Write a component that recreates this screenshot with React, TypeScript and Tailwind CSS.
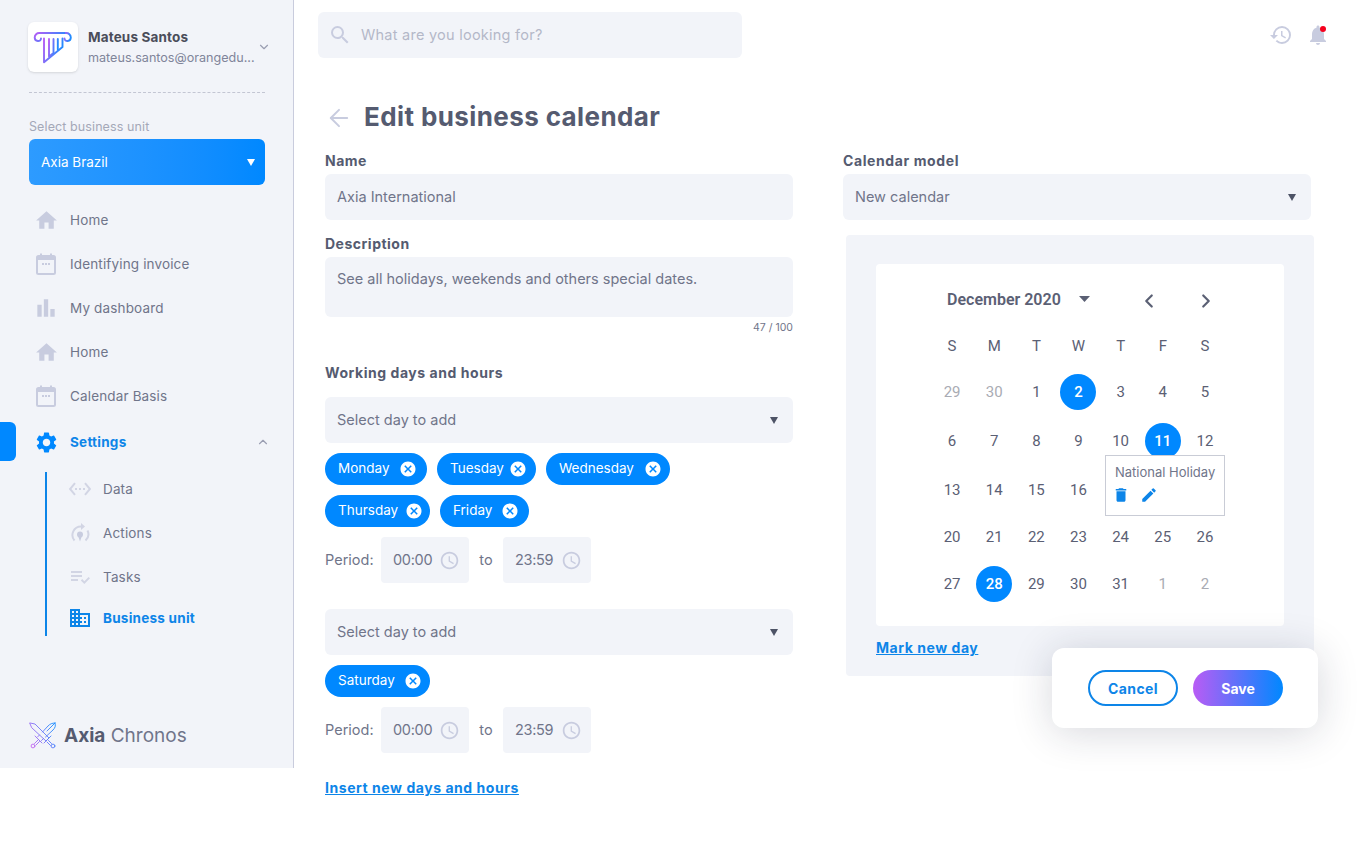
import { ArrowLeft, ChevronDown, ChevronLeft, ChevronRight, ChevronUp } from 'lucide-react';
import {
  MdAccessTime,
  MdBarChart,
  MdCancel,
  MdDelete,
  MdDomain,
  MdEdit,
  MdHistory,
  MdHome,
  MdNotifications,
  MdPlaylistAddCheck,
  MdSearch,
  MdSettings,
  MdSettingsEthernet,
} from 'react-icons/md';

function Triangle({ className, w = 8, h = 7 }: { className: string; w?: number; h?: number }) {
  return (
    <svg className={className} width={w} height={h} viewBox="0 0 8 7" preserveAspectRatio="none">
      <path d="M0 0H8L4 7z" fill="currentColor" />
    </svg>
  );
}

function CalendarIcon() {
  return (
    <svg width="20" height="22" viewBox="0 0 20 22" fill="none">
      <rect x="1" y="3" width="18" height="18" rx="1.5" stroke="#c8ccdf" strokeWidth="2" />
      <rect x="1" y="3" width="18" height="4" fill="#c8ccdf" />
      <rect x="4" y="0.5" width="2" height="4" fill="#c8ccdf" />
      <rect x="14" y="0.5" width="2" height="4" fill="#c8ccdf" />
      <rect x="6" y="10" width="2" height="2" fill="#c8ccdf" />
      <rect x="9" y="10" width="2" height="2" fill="#c8ccdf" />
      <rect x="12" y="10" width="2" height="2" fill="#c8ccdf" />
    </svg>
  );
}

function ActionsIcon() {
  return (
    <svg width="20" height="20" viewBox="0 0 20 20" fill="none">
      <path d="M4.500 17.500A8.500 8.500 0 0 1 11 3.500" stroke="#d2d5e4" strokeWidth="2" />
      <path d="M15.500 17.500A8.500 8.500 0 0 0 17.500 7.500" stroke="#d2d5e4" strokeWidth="2" />
      <path d="M11 0L15 3.500L11 7z" fill="#d2d5e4" />
      <circle cx="10" cy="11.500" r="3" fill="#c8ccdf" />
      <path d="M8.300 13.500H11.700L10 18.500z" fill="#c8ccdf" />
    </svg>
  );
}

function PillarLogo() {
  return (
    <svg width="50" height="50" viewBox="28 22 50 50" fill="none">
      <defs>
        <linearGradient id="pillar" x1="0" y1="0" x2="1" y2="0.4">
          <stop offset="0" stopColor="#b95cf5" />
          <stop offset="1" stopColor="#1f8cff" />
        </linearGradient>
      </defs>
      <g stroke="url(#pillar)" strokeWidth="1.9" strokeLinecap="round" strokeLinejoin="round">
        <path d="M66 33H39.500a4.500 4.500 0 0 0-4.800 4.500c0 4.500 6.300 4.500 6.300 1" />
        <path d="M66 33a4.500 4.500 0 0 1 4.800 4.500c0 4.500-6.300 4.500-6.300 1" />
        <path d="M41 38.500H64.500" />
        <path d="M44 38.500V62.300L62.500 47V38.500" />
        <path d="M49 39V56.500L53.500 53V39M57.800 39V49.500" />
      </g>
    </svg>
  );
}

function SwordsLogo() {
  return (
    <svg width="28" height="27" viewBox="0 0 28 27" fill="none">
      <defs>
        <linearGradient id="swords" gradientUnits="userSpaceOnUse" x1="2" y1="20" x2="26" y2="8">
          <stop offset="0" stopColor="#c261f0" />
          <stop offset="1" stopColor="#1f8cff" />
        </linearGradient>
      </defs>
      <g stroke="url(#swords)" strokeWidth="0.9" strokeLinejoin="round" strokeLinecap="round">
        {/* sword from the top left */}
        <path d="M1 1L6 2L20 16L17 19L3 6z" />
        <path d="M15 21L22 14M19.500 18.500L22.500 21.500M18 20L21.500 23.500" />
        <circle cx="24" cy="24" r="1.900" />
        {/* sword from the top right, passing under the first */}
        <path d="M26 1C27 4 26 6 24 8L16.500 15M26 1C23 1 21 2 19 4L13.500 10M26 1L18 9" />
        <path d="M10.500 13L8.500 15M14.500 16.500L12.500 18.500" />
        <path d="M6 14L13 21M9 18L5.500 21.500M10.500 19.500L7 23" />
        <circle cx="4" cy="24" r="1.900" />
      </g>
    </svg>
  );
}

function NavItem({ icon, label, active }: { icon: React.ReactNode; label: string; active?: boolean }) {
  return (
    <div className="flex h-[44px] items-center">
      <span className="flex w-[34px] justify-center">{icon}</span>
      <span
        className={
          active
            ? 'ml-[7px] text-[13.5px] font-bold tracking-[0.25px] text-[#0d85e8]'
            : 'ml-[7px] text-[13.5px] tracking-[0.15px] text-[#70758a]'
        }
      >
        {label}
      </span>
    </div>
  );
}

function SubItem({ icon, label, active }: { icon: React.ReactNode; label: string; active?: boolean }) {
  return (
    <div className="flex items-center">
      <span className="flex w-[24px] justify-center">{icon}</span>
      <span
        className={
          active
            ? 'ml-[11px] text-[13.5px] font-bold tracking-[0.25px] text-[#0d85e8]'
            : 'ml-[11px] text-[13.5px] tracking-[0.15px] text-[#70758a]'
        }
      >
        {label}
      </span>
    </div>
  );
}

function Chip({ label, size }: { label: string; size: string }) {
  return (
    <div className={`flex h-[32px] items-center justify-between rounded-full bg-[#0088ff] pl-[13px] text-[13.5px] text-white ${size}`}>
      <span className="-mt-px">{label}</span>
      <MdCancel className="text-white" size={18} />
    </div>
  );
}

function SelectBox({ label }: { label: string }) {
  return (
    <div className="flex h-[46px] items-center justify-between rounded-md bg-[#f2f4f9] pl-[12px] pr-[15px] text-[14.5px] text-[#70758a]">
      <span>{label}</span>
      <Triangle className="text-[#4d5366]" />
    </div>
  );
}

function TimeBox({ value }: { value: string }) {
  return (
    <div className="flex h-[46px] w-[88px] items-center justify-between rounded-sm bg-[#f2f4f9] pl-[12px] pr-[9px] text-[14.5px] tracking-[-0.3px] text-[#70758a]">
      <span>{value}</span>
      <MdAccessTime className="text-[#c8ccdf]" size={21} />
    </div>
  );
}

function PeriodRow() {
  return (
    <div className="mt-[10px] flex items-center text-[14.5px] text-[#70758a]">
      <span className="w-[56px]">Period:</span>
      <TimeBox value="00:00" />
      <span className="w-[34px] text-center">to</span>
      <TimeBox value="23:59" />
    </div>
  );
}

const weekDays = ['S', 'M', 'T', 'W', 'T', 'F', 'S'];
const days = [
  29, 30, 1, 2, 3, 4, 5, 6, 7, 8, 9, 10, 11, 12, 13, 14, 15, 16, 17, 18, 19, 20, 21, 22, 23, 24, 25, 26, 27, 28, 29, 30,
  31, 1, 2,
];

function Calendar() {
  return (
    <div className="relative h-[362px] rounded-sm bg-white pt-[24px] font-['Roboto',sans-serif]">
      {/* Month header */}
      <div className="flex h-[24px] items-center pl-[71px] text-[#5b6074]">
        <span className="w-[114px] whitespace-nowrap text-[16px] font-semibold">December 2020</span>
        <Triangle className="-mt-[3px] ml-[18px]" w={11} h={6} />
        <ChevronLeft className="ml-[48px] mt-[2px]" size={22} strokeWidth={2.4} />
        <ChevronRight className="ml-[35px] mt-[2px]" size={22} strokeWidth={2.4} />
      </div>

      <div className="ml-[55px] mt-[24px] grid w-[295px] grid-cols-7 text-[15px] text-[#5b6074]">
        {weekDays.map((d, i) => (
          <div key={i} className="flex h-[20px] items-center justify-center">
            {d}
          </div>
        ))}
      </div>

      <div className="ml-[55px] mt-[12px] grid w-[295px] grid-cols-7 grid-rows-[48px_50px_48px_46px_48px] text-[15px] text-[#5b6074]">
        {days.map((d, i) => {
          const muted = i < 2 || i > 32;
          const picked = i === 3 || i === 12 || i === 29;
          return (
            <div key={i} className="flex items-center justify-center">
              {picked ? (
                <span className="flex h-[36px] w-[36px] items-center justify-center rounded-full bg-[#0088ff] font-medium text-white">
                  {d}
                </span>
              ) : (
                <span className={muted ? 'text-[#a9abb3]' : ''}>{d}</span>
              )}
            </div>
          );
        })}
      </div>

      {/* Day tooltip */}
      <div className="absolute left-[229px] top-[191px] h-[61px] w-[120px] border border-[#c9ccd6] bg-white pl-[9px] pt-[7px] font-['Inter',sans-serif]">
        <p className="whitespace-nowrap text-[13px] leading-[18px] text-[#70758a]">National Holiday</p>
        <div className="-ml-[3px] mt-[5px] flex gap-[10px] text-[#0d85e8]">
          <MdDelete size={18} />
          <MdEdit size={18} />
        </div>
      </div>
    </div>
  );
}

export default function App() {
  return (
    <div className="relative flex min-h-[842px] w-[1366px] items-start bg-white font-['Inter',sans-serif] text-[#555b70]">
      {/* Sidebar */}
      <aside className="relative flex h-[768px] w-[294px] shrink-0 flex-col border-r border-[#c9ccdd] bg-[#f2f4f9] pl-[29px] pr-[28px] pt-[22px]">
        <div className="flex h-[50px] items-center">
          <div className="-ml-px h-[50px] w-[50px] shrink-0 rounded-md bg-white shadow-sm">
            <PillarLogo />
          </div>
          <div className="ml-[10px] w-[171px] shrink-0">
            <p className="text-[13.5px] font-bold leading-[18px] tracking-[0.15px] text-[#4a4d5a]">Mateus Santos</p>
            <p className="mt-[3px] whitespace-nowrap text-[12.6px] leading-[18px] text-[#80859a]">
              mateus.santos@orangedu...
            </p>
          </div>
          <ChevronDown className="ml-[-2px] shrink-0 text-[#9a9eb2]" size={14} />
        </div>

        <div className="mt-[20px] border-t border-dashed border-[#c3c6d3]" />

        <p className="mt-[26px] text-[12.5px] leading-[16px] tracking-[0.1px] text-[#a4a8b8]">Select business unit</p>
        <div className="mt-[4px] flex h-[46px] items-center justify-between rounded-md bg-linear-to-r from-[#2d9bff] to-[#0088ff] pl-[12px] pr-[10px] text-[13.5px] text-white">
          <span>Axia Brazil</span>
          <Triangle className="text-white" />
        </div>

        <nav className="mt-[13px]">
          <NavItem icon={<MdHome className="text-[#c8ccdf]" size={25} />} label="Home" />
          <NavItem icon={<CalendarIcon />} label="Identifying invoice" />
          <NavItem icon={<MdBarChart className="text-[#c8ccdf]" size={26} />} label="My dashboard" />
          <NavItem icon={<MdHome className="text-[#c8ccdf]" size={25} />} label="Home" />
          <NavItem icon={<CalendarIcon />} label="Calendar Basis" />
          <div className="mt-[2px] flex items-center justify-between">
            <NavItem icon={<MdSettings className="text-[#0088ff]" size={25} />} label="Settings" active />
            <ChevronUp className="mr-[-5px] text-[#9a9eb2]" size={14} />
          </div>
        </nav>

        {/* Active marker on the screen edge */}
        <div className="absolute left-0 top-[422px] h-[39px] w-[16px] rounded-r-md bg-[#0088ff]" />

        <div className="ml-[16px] mt-[8px] flex h-[164px] flex-col border-l-2 border-[#0d85e8] pl-[21px] pt-[6px]">
          <div className="flex h-[22px] items-center">
            <SubItem icon={<MdSettingsEthernet className="text-[#d2d5e4]" size={24} />} label="Data" />
          </div>
          <div className="mt-[22px] flex h-[22px] items-center">
            <SubItem icon={<ActionsIcon />} label="Actions" />
          </div>
          <div className="mt-[22px] flex h-[22px] items-center">
            <SubItem icon={<MdPlaylistAddCheck className="text-[#d2d5e4]" size={24} />} label="Tasks" />
          </div>
          <div className="mt-[19px] flex h-[22px] items-center">
            <SubItem icon={<MdDomain className="text-[#0d85e8]" size={24} />} label="Business unit" active />
          </div>
        </div>

        <div className="mt-[85px] flex items-center">
          <SwordsLogo />
          <p className="ml-[7px] mt-[1px] text-[19px] text-[#70758a]">
            <span className="font-bold text-[#555b70]">Axia</span> Chronos
          </p>
        </div>
      </aside>

      {/* Main */}
      <main className="min-w-0 flex-1">
        <div className="flex items-center justify-between pl-[24px] pr-[36px] pt-[12px]">
          <div className="flex h-[46px] w-[424px] items-center rounded-md bg-[#f2f4f9] pl-[10px] text-[14.5px] tracking-[0.25px] text-[#b4b8c8]">
            <MdSearch className="text-[#c8ccdf]" size={24} />
            <span className="ml-[9px]">What are you looking for?</span>
          </div>
          <div className="flex items-center gap-[13px]">
            <MdHistory className="text-[#c8ccdf]" size={24} />
            <div className="relative">
              <MdNotifications className="text-[#c8ccdf]" size={24} />
              <span className="absolute right-[4px] top-[3px] h-[6px] w-[6px] rounded-full bg-[#f5001d]" />
            </div>
          </div>
        </div>

        <div className="pl-[31px]">
          <div className="mt-[40px] flex h-[36px] items-center">
            <ArrowLeft className="mt-[3px] text-[#c8ccdf]" size={28} strokeWidth={1.7} />
            <h1 className="ml-[11px] text-[26px] font-bold tracking-[0.4px] text-[#555b70]">Edit business calendar</h1>
          </div>

          <div className="mt-[18px] flex gap-[50px]">
            {/* Left column */}
            <div className="w-[468px]">
              <p className="text-[14px] font-bold leading-[18px] tracking-[0.5px]">Name</p>
              <div className="mt-[4px] flex h-[46px] items-center rounded-md bg-[#f2f4f9] pl-[12px] text-[14.5px] text-[#70758a]">
                Axia International
              </div>
              <p className="mt-[15px] text-[14px] font-bold leading-[18px] tracking-[0.5px]">Description</p>
              <div className="mt-[4px] h-[60px] rounded-md bg-[#f2f4f9] pl-[12px] pt-[12px] text-[14.5px] leading-[20px] text-[#70758a]">
                See all holidays, weekends and others special dates.
              </div>
              <p className="mt-[5px] text-right text-[10.5px] leading-[12px] text-[#70758a]">47 / 100</p>
              <p className="mt-[30px] text-[14px] font-bold leading-[18px] tracking-[0.55px]">Working days and hours</p>

              <div className="mt-[15px]">
                <SelectBox label="Select day to add" />
              </div>
              <div className="mt-[10px] flex gap-[10px]">
                <Chip label="Monday" size="w-[102px] pr-[10px]" />
                <Chip label="Tuesday" size="w-[99px] pr-[9px]" />
                <Chip label="Wednesday" size="w-[124px] pr-[8px]" />
              </div>
              <div className="mt-[10px] flex gap-[10px]">
                <Chip label="Thursday" size="w-[105px] pr-[7px]" />
                <Chip label="Friday" size="w-[89px] pr-[10px]" />
              </div>
              <PeriodRow />

              <div className="mt-[26px]">
                <SelectBox label="Select day to add" />
              </div>
              <div className="mt-[10px] flex">
                <Chip label="Saturday" size="w-[105px] pr-[8px]" />
              </div>
              <PeriodRow />

              <p className="mt-[26px] text-[14px] font-bold leading-[18px] tracking-[0.55px] text-[#0d85e8] underline">
                Insert new days and hours
              </p>
            </div>

            {/* Right column */}
            <div className="w-[468px]">
              <p className="text-[14px] font-bold leading-[18px] tracking-[0.6px]">Calendar model</p>
              <div className="mt-[4px]">
                <SelectBox label="New calendar" />
              </div>
              <div className="ml-[3px] mt-[15px] h-[441px] w-[468px] rounded-sm bg-[#f2f4f9] px-[30px] pt-[29px]">
                <Calendar />
                <p className="mt-[13px] text-[14px] font-bold leading-[18px] tracking-[0.55px] text-[#0d85e8] underline">
                  Mark new day
                </p>
              </div>
            </div>
          </div>
        </div>
      </main>

      {/* Floating actions */}
      <div className="absolute left-[1052px] top-[648px] flex h-[80px] w-[266px] items-center gap-[15px] rounded-xl bg-white pl-[36px] shadow-[0_4px_40px_rgba(30,35,60,0.18)]">
        <button className="h-[36px] w-[90px] rounded-full border-2 border-[#0d85e8] text-[14px] font-bold tracking-[0.4px] text-[#0d85e8]">
          Cancel
        </button>
        <button className="h-[36px] w-[90px] rounded-full bg-[linear-gradient(90deg,#b95cf5,#0088ff)] text-[14px] font-bold text-white">
          Save
        </button>
      </div>
    </div>
  );
}
